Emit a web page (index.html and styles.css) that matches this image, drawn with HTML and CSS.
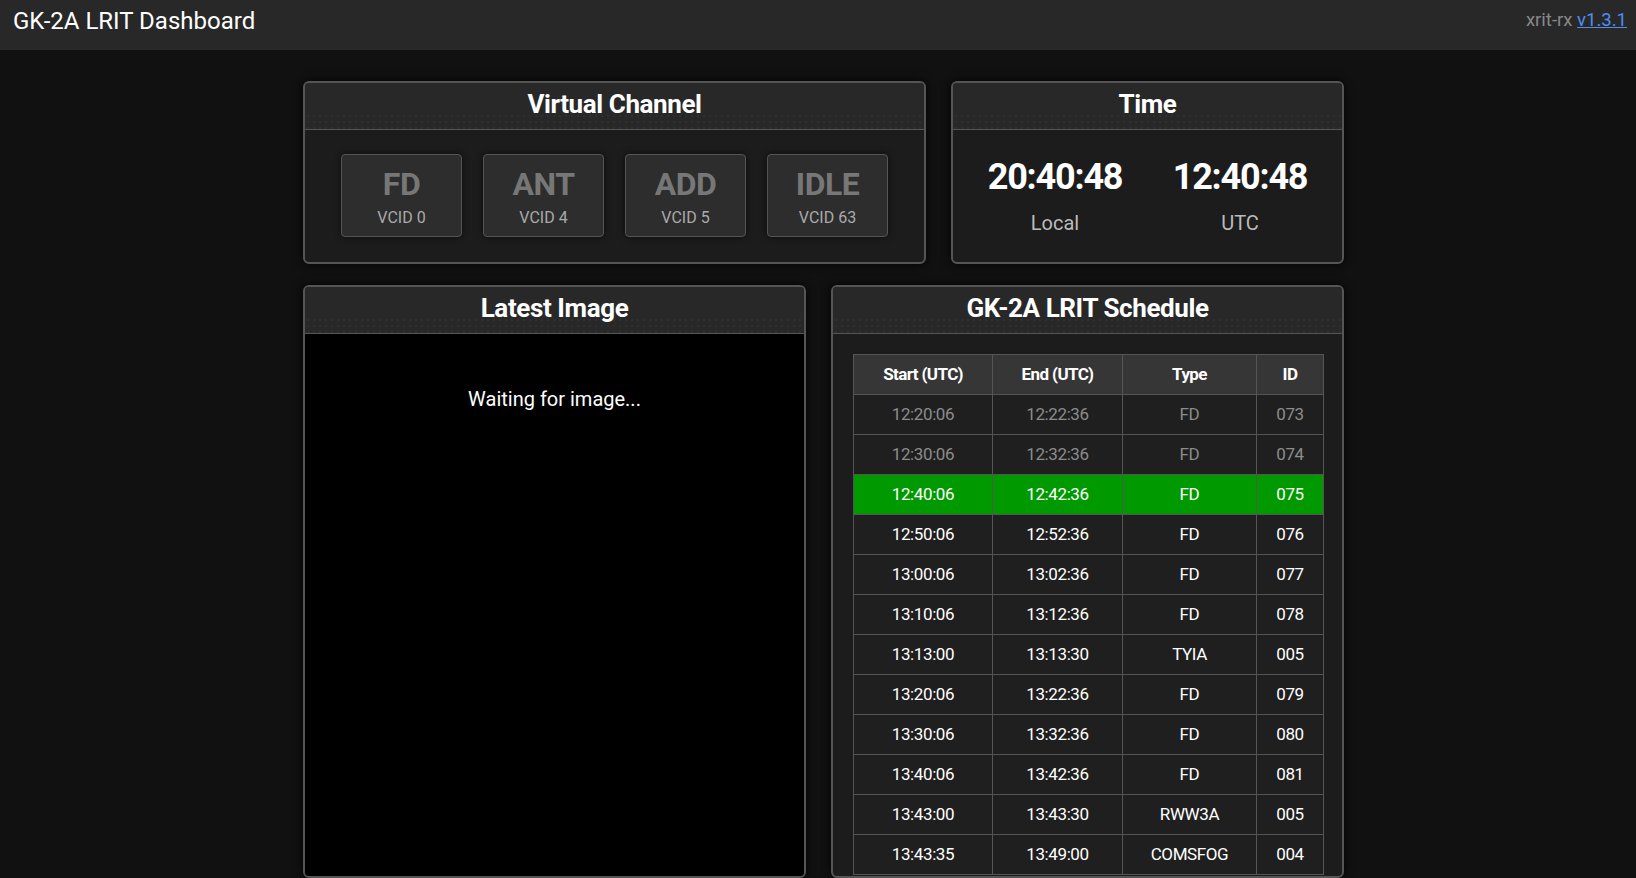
FILE: index.html
```html
<!DOCTYPE html>
<html lang="en">
<head>
<meta charset="utf-8">
<title>GK-2A LRIT Dashboard</title>
<link rel="stylesheet" href="styles.css">
</head>
<body>
<header class="topbar">
  <div class="brand">GK-2A LRIT Dashboard</div>
  <div class="version">xrit-rx <a href="#">v1.3.1</a></div>
</header>
<main class="dash">
  <div class="row row-top">
    <section class="panel panel-vc">
      <h2 class="panel-title">Virtual Channel</h2>
      <div class="vc-body">
        <div class="vc"><span class="vc-name">FD</span><span class="vc-id">VCID 0</span></div>
        <div class="vc"><span class="vc-name">ANT</span><span class="vc-id">VCID 4</span></div>
        <div class="vc"><span class="vc-name">ADD</span><span class="vc-id">VCID 5</span></div>
        <div class="vc"><span class="vc-name">IDLE</span><span class="vc-id">VCID 63</span></div>
      </div>
    </section>
    <section class="panel panel-time">
      <h2 class="panel-title">Time</h2>
      <div class="time-body">
        <div class="clock"><span class="clock-value">20:40:48</span><span class="clock-label">Local</span></div>
        <div class="clock"><span class="clock-value">12:40:48</span><span class="clock-label">UTC</span></div>
      </div>
    </section>
  </div>
  <div class="row row-bottom">
    <section class="panel panel-image">
      <h2 class="panel-title">Latest Image</h2>
      <div class="image-body">
        <p class="waiting">Waiting for image...</p>
      </div>
    </section>
    <section class="panel panel-schedule">
      <h2 class="panel-title">GK-2A LRIT Schedule</h2>
      <div class="schedule-body">
        <table class="schedule">
          <colgroup>
            <col class="c-start"><col class="c-end"><col class="c-type"><col class="c-id">
          </colgroup>
          <thead>
            <tr><th>Start (UTC)</th><th>End (UTC)</th><th>Type</th><th>ID</th></tr>
          </thead>
          <tbody>
            <tr class="past"><td>12:20:06</td><td>12:22:36</td><td>FD</td><td>073</td></tr>
            <tr class="past"><td>12:30:06</td><td>12:32:36</td><td>FD</td><td>074</td></tr>
            <tr class="current"><td>12:40:06</td><td>12:42:36</td><td>FD</td><td>075</td></tr>
            <tr><td>12:50:06</td><td>12:52:36</td><td>FD</td><td>076</td></tr>
            <tr><td>13:00:06</td><td>13:02:36</td><td>FD</td><td>077</td></tr>
            <tr><td>13:10:06</td><td>13:12:36</td><td>FD</td><td>078</td></tr>
            <tr><td>13:13:00</td><td>13:13:30</td><td>TYIA</td><td>005</td></tr>
            <tr><td>13:20:06</td><td>13:22:36</td><td>FD</td><td>079</td></tr>
            <tr><td>13:30:06</td><td>13:32:36</td><td>FD</td><td>080</td></tr>
            <tr><td>13:40:06</td><td>13:42:36</td><td>FD</td><td>081</td></tr>
            <tr><td>13:43:00</td><td>13:43:30</td><td>RWW3A</td><td>005</td></tr>
            <tr><td>13:43:35</td><td>13:49:00</td><td>COMSFOG</td><td>004</td></tr>
          </tbody>
        </table>
      </div>
    </section>
  </div>
</main>
</body>
</html>
```

FILE: styles.css
```css
* { box-sizing: border-box; }

html, body {
  margin: 0;
  padding: 0;
  height: 878px;
  overflow: hidden;
}

body {
  background: #111111;
  color: #ffffff;
  font-family: Roboto, "Noto Sans", "Liberation Sans", sans-serif;
}

.topbar {
  height: 50px;
  background: #282828;
  display: flex;
  justify-content: space-between;
  align-items: flex-start;
  padding: 0 9px 0 13px;
}

.brand {
  font-size: 24px;
  padding-top: 7px;
}

.version {
  font-size: 18.5px;
  color: #888888;
  padding-top: 9px;
}

.version a {
  color: #4f8cf0;
}

.dash {
  width: 1052px;
  margin: 31px auto 0;
  padding-left: 11px;
}

.row {
  display: flex;
  gap: 25px;
}

.row-top {
  margin-bottom: 21px;
}

.panel {
  background: #1c1c1c;
  border: 2px solid #555555;
  border-radius: 6px;
  box-shadow: 0 0 10px rgba(0, 0, 0, 0.85);
  overflow: hidden;
  display: flex;
  flex-direction: column;
}

.panel-title {
  margin: 0;
  flex: none;
  height: 47px;
  padding-top: 6px;
  border-bottom: 1px solid #555555;
  background:
    linear-gradient(#282828 0 62%, transparent 62%),
    radial-gradient(circle, rgba(255, 255, 255, 0.035) 0.7px, transparent 1.2px) 0 0 / 6px 6px,
    #282828;
  text-align: center;
  font-size: 26px;
  font-weight: 700;
  letter-spacing: -0.4px;
  line-height: normal;
}

/* Virtual channel */
.panel-vc { width: 623px; }

.vc-body {
  display: flex;
  justify-content: center;
  gap: 21px;
  padding: 24px 0 25px;
}

.vc {
  width: 121px;
  height: 83px;
  border: 1px solid #555555;
  border-radius: 4px;
  background: #2d2d2d;
  box-shadow: 0 0 6px rgba(0, 0, 0, 0.6);
  display: flex;
  flex-direction: column;
  align-items: center;
  padding-top: 10px;
}

.vc-name {
  font-size: 32px;
  font-weight: 700;
  color: #777777;
  letter-spacing: -0.5px;
}

.vc-id {
  font-size: 16px;
  color: #aaaaaa;
  margin-top: 5px;
}

/* Time */
.panel-time { width: 393px; }

.time-body {
  display: flex;
  justify-content: center;
  gap: 25px;
  padding-top: 24px;
}

.clock {
  width: 160px;
  display: flex;
  flex-direction: column;
  align-items: center;
}

.clock-value {
  font-size: 36px;
  font-weight: 700;
  letter-spacing: -1.2px;
  padding-top: 2px;
}

.clock-label {
  font-size: 20px;
  color: #bbbbbb;
  margin-top: 13px;
}

/* Bottom row */
.row-bottom .panel { height: 593px; }

.panel-image { width: 503px; }

.image-body {
  flex: 1;
  background: #000000;
  padding-top: 53px;
}

.waiting {
  margin: 0;
  text-align: center;
  font-size: 20px;
}

.panel-schedule { width: 513px; }

.schedule-body {
  flex: 1;
  overflow: hidden;
  padding: 20px 20px 0;
}

.schedule {
  width: 100%;
  border-collapse: collapse;
  table-layout: fixed;
  text-align: center;
}

.c-start { width: 139px; }
.c-end { width: 130px; }
.c-type { width: 134px; }
.c-id { width: 67px; }

.schedule th,
.schedule td {
  border: 1px solid #555555;
  padding: 0;
  line-height: 39px;
  height: 40px;
  white-space: nowrap;
}

.schedule th {
  background: #363636;
  font-size: 17px;
  font-weight: 700;
  letter-spacing: -0.6px;
}

.schedule td {
  background: #1f1f1f;
  font-size: 17px;
  letter-spacing: -0.4px;
  color: #ffffff;
}

.schedule .past td {
  color: #8c8c8c;
}

.schedule .current td {
  background: #009a00;
}
```
